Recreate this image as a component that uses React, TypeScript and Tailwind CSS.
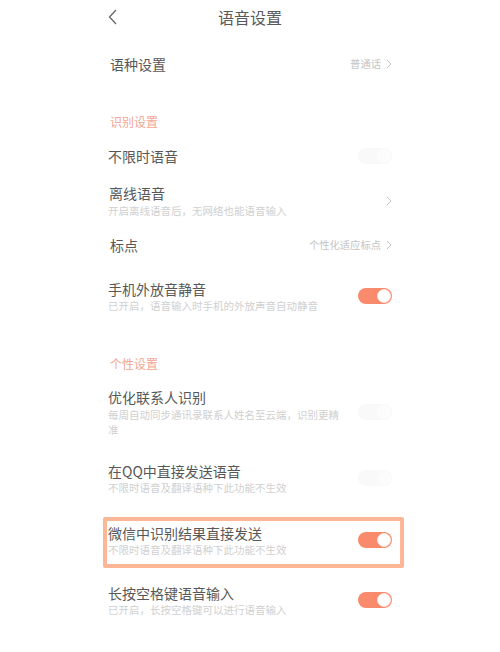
import React from 'react';

const FONT = { fontFamily: '"Noto Sans CJK SC", "Noto Sans", sans-serif' };

function Toggle({ on }: { on: boolean }) {
  if (on) {
    return (
      <div className="w-[34px] h-[16px] rounded-full bg-[#f98a6c] flex items-center justify-end pr-[1px] shrink-0">
        <div className="w-[14px] h-[14px] rounded-full bg-white border border-[#fbe3dc]" />
      </div>
    );
  }
  return (
    <div className="w-[34px] h-[16px] rounded-full bg-[#f9f9fa] flex items-center justify-end pr-[1px] shrink-0">
      <div className="w-[14px] h-[14px] rounded-full bg-[#fcfcfd]" />
    </div>
  );
}

function Chevron() {
  return (
    <svg width="6" height="10" viewBox="0 0 6 10" className="shrink-0">
      <path d="M1 1 L5 5 L1 9" fill="none" stroke="#c4c4c4" strokeWidth="1" />
    </svg>
  );
}

function Section({ label, className }: { label: string; className: string }) {
  return (
    <div className={`h-[20px] flex items-center text-[12px] text-[#f3a693] pl-[2px] ${className}`}>
      {label}
    </div>
  );
}

export default function App() {
  return (
    <div className="w-full min-h-[652px] bg-white" style={FONT}>
      <div className="mx-auto w-[284px]">
        {/* Header */}
        <div className="h-[34px] grid grid-cols-[40px_1fr_40px] items-center">
          <svg width="10" height="16" viewBox="0 0 10 16">
            <path d="M8 1 L1.5 8 L8 15" fill="none" stroke="#666" strokeWidth="1.3" />
          </svg>
          <div className="text-center text-[16px] text-[#5a5a5a]">语音设置</div>
          <div />
        </div>

        {/* 语种设置 */}
        <div className="mt-[10px] h-[40px] flex items-center justify-between pl-[2px]">
          <span className="text-[14px] text-[#585858]">语种设置</span>
          <div className="flex items-center gap-[5px] text-[10.3px] text-[#c4c4c4]">
            <span>普通话</span>
            <Chevron />
          </div>
        </div>

        <Section label="识别设置" className="mt-[28px]" />

        <div className="mt-[6px] h-[36px] flex items-center justify-between">
          <span className="text-[14px] text-[#585858]">不限时语音</span>
          <Toggle on={false} />
        </div>

        <div className="mt-[9px] flex items-center justify-between">
          <div>
            <div className="h-[20px] flex items-center text-[14px] text-[#585858] pl-[1px]">离线语音</div>
            <div className="h-[16px] flex items-center text-[10.5px] text-[#d0d0d0]">开启离线语音后，无网络也能语音输入</div>
          </div>
          <Chevron />
        </div>

        <div className="mt-[14px] h-[24px] flex items-center justify-between pl-[2px]">
          <span className="text-[14px] text-[#585858]">标点</span>
          <div className="flex items-center gap-[5px] text-[10.3px] text-[#c4c4c4]">
            <span>个性化适应标点</span>
            <Chevron />
          </div>
        </div>

        <div className="mt-[22px] flex items-center justify-between">
          <div>
            <div className="h-[20px] flex items-center text-[14px] text-[#585858]">手机外放音静音</div>
            <div className="h-[14px] flex items-center text-[10.5px] text-[#d0d0d0]">已开启，语音输入时手机的外放声音自动静音</div>
          </div>
          <Toggle on={true} />
        </div>

        <Section label="个性设置" className="mt-[41px]" />

        <div className="mt-[13px] flex items-center justify-between">
          <div className="w-[232px]">
            <div className="h-[20px] flex items-center text-[14px] text-[#585858]">优化联系人识别</div>
            <div className="text-[10.5px] leading-[15px] text-[#d0d0d0]">每周自动同步通讯录联系人姓名至云端，识别更精准</div>
          </div>
          <Toggle on={false} />
        </div>

        <div className="mt-[24px] flex items-center justify-between">
          <div>
            <div className="h-[20px] flex items-center text-[14px] text-[#585858]">在QQ中直接发送语音</div>
            <div className="h-[14px] flex items-center text-[10.5px] text-[#d0d0d0]">不限时语音及翻译语种下此功能不生效</div>
          </div>
          <Toggle on={false} />
        </div>

        {/* Highlighted row */}
        <div className="mt-[22px] -ml-[5px] w-[301px] border-[4px] border-[#fdb797] rounded-[2px] pl-[1px] pr-[8px] pt-[2px] pb-[7px] flex items-center justify-between">
          <div>
            <div className="h-[20px] flex items-center text-[14px] text-[#585858]">微信中识别结果直接发送</div>
            <div className="h-[14px] flex items-center text-[10.5px] text-[#d0d0d0]">不限时语音及翻译语种下此功能不生效</div>
          </div>
          <Toggle on={true} />
        </div>

        <div className="mt-[15px] flex items-center justify-between">
          <div>
            <div className="h-[20px] flex items-center text-[14px] text-[#585858]">长按空格键语音输入</div>
            <div className="h-[14px] flex items-center text-[10.5px] text-[#d0d0d0]">已开启，长按空格键可以进行语音输入</div>
          </div>
          <Toggle on={true} />
        </div>
      </div>
    </div>
  );
}
